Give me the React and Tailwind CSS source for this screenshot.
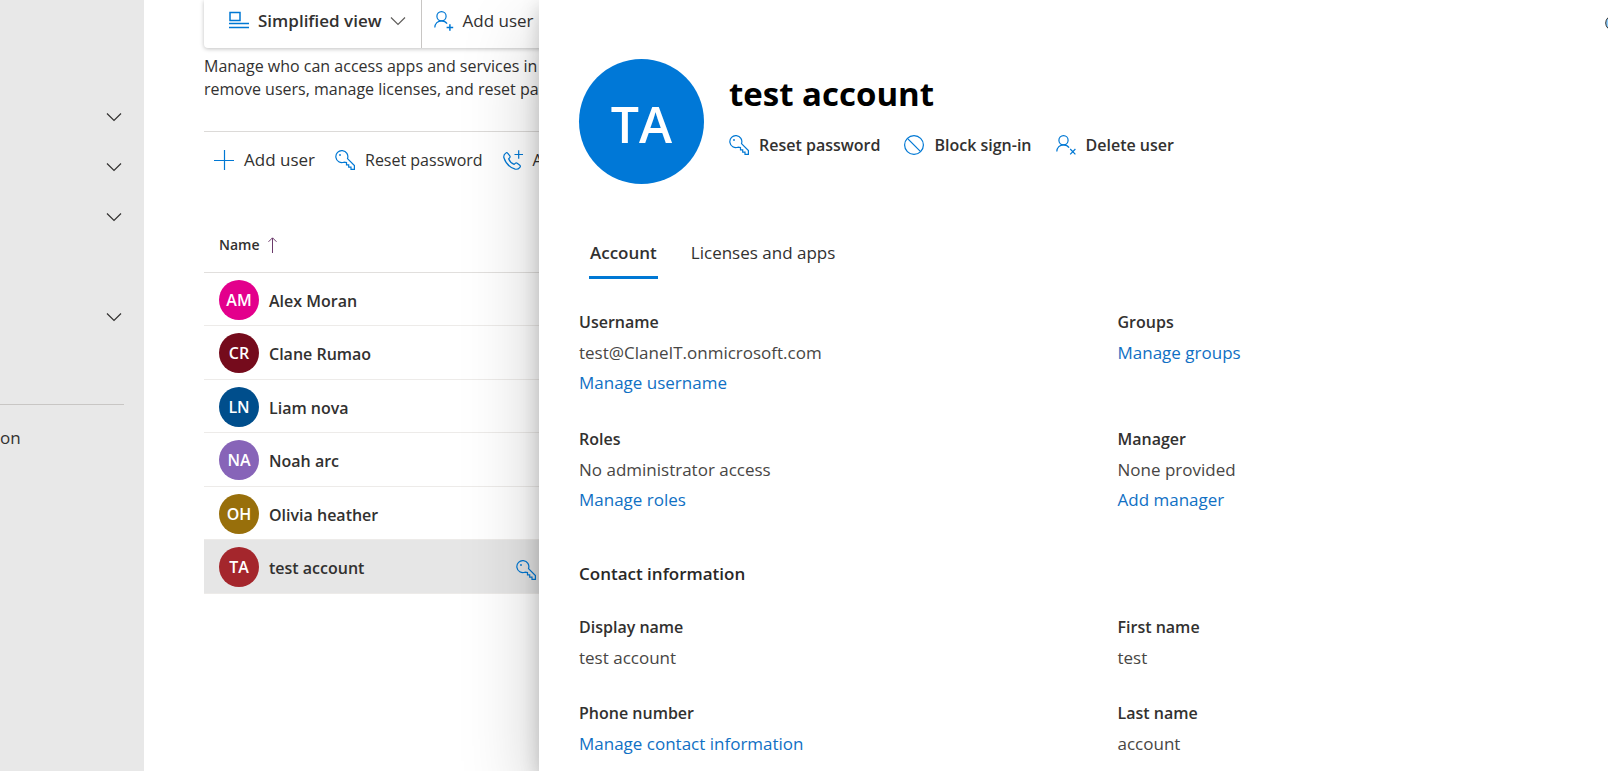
import React from "react";

function Icon({ children, className = "text-[#0078d4]", size = 20 }) {
  return (
    <svg
      width={size}
      height={size}
      viewBox="0 0 20 20"
      fill="none"
      stroke="currentColor"
      strokeWidth="1.2"
      className={`shrink-0 ${className}`}
      aria-hidden="true"
    >
      {children}
    </svg>
  );
}

const KeyIcon = ({ className }) => (
  <Icon className={className}>
    <path d="M12.5 8.6 19.4 15.5V19.4H16V17.1H13.7V14.8H11.5V12.6L9 12.2A6 6 0 1 1 12.5 8.6Z" />
    <circle cx="5" cy="5" r="0.9" fill="currentColor" stroke="none" />
  </Icon>
);

const UserIcon = ({ children }) => (
  <Icon>
    <circle cx="7.5" cy="5.2" r="4.6" />
    <path d="M.8 16.5C.9 12.6 3.8 9.8 7.5 9.8c2.4 0 4.4 1 5.6 2.8" />
    {children}
  </Icon>
);

const UserPlusIcon = () => (
  <UserIcon>
    <path d="M12.6 16.5H19.2M15.9 13.2V19.8" strokeWidth="1.5" />
  </UserIcon>
);

const UserRemoveIcon = () => (
  <UserIcon>
    <path d="M14.2 14 19.4 19.4M19.4 14 14.2 19.4" />
  </UserIcon>
);

const PlusIcon = () => (
  <Icon>
    <path d="M0 10.5H20M10.5 0V20" />
  </Icon>
);

const BlockIcon = () => (
  <Icon>
    <circle cx="10" cy="10" r="9.4" />
    <path d="M3.4 3.4 16.6 16.6" />
  </Icon>
);

const PhonePlusIcon = () => (
  <Icon>
    <path d="M4.6 3.2 6.8 5.8C7.3 6.5 7.2 7.2 6.6 7.8L5.6 8.8C6.6 11.4 8.6 13.4 11.2 14.4L12.2 13.4C12.8 12.8 13.5 12.7 14.2 13.2L16.8 15.2C17.6 15.9 17.5 16.6 16.9 17.3 15.7 18.8 14.2 19.6 12.2 19.1 6.8 17.4 2.6 13.2.9 7.8.4 5.8 1.2 4.3 2.7 3.1 3.4 2.5 4.1 2.5 4.6 3.2Z" />
    <path d="M11.5 4.5H20M15.7.3V8.8" />
  </Icon>
);

const ViewIcon = () => (
  <Icon>
    <path d="M1 1.5H11V9.5H1Z" strokeWidth="1.5" />
    <path d="M0 12.5H20M0 16.5H20" strokeWidth="1.5" />
  </Icon>
);

const Chevron = ({ className = "" }) => (
  <svg width="16" height="16" viewBox="0 0 16 16" fill="none" stroke="currentColor" strokeWidth="1.2" className={className} aria-hidden="true">
    <path d="M1 4.5 8 11.5 15 4.5" />
  </svg>
);

const users = [
  ["AM", "Alex Moran", "bg-[#e3008c]"],
  ["CR", "Clane Rumao", "bg-[#750b1c]"],
  ["LN", "Liam nova", "bg-[#004e8c]"],
  ["NA", "Noah arc", "bg-[#8764b8]"],
  ["OH", "Olivia heather", "bg-[#986f0b]"],
  ["TA", "test account", "bg-[#a4262c]"],
];

function Field({ label, value, link }) {
  return (
    <div>
      <h3 className="text-[16px] leading-[31px] font-semibold text-[#323130]">{label}</h3>
      {value && <p className="text-[#484644]">{value}</p>}
      {link && (
        <a href="#" className="block text-[#1070c4]">
          {link}
        </a>
      )}
    </div>
  );
}

function Sidebar() {
  return (
    <nav className="w-36 shrink-0 bg-[#e8e8e8] pt-[92px]" aria-label="Main">
      {[true, true, true, false, true].map((expandable, i) => (
        <div key={i} className="flex h-[50px] items-center justify-end pr-[22px]">
          {expandable && (
            <button aria-label="Expand section">
              <Chevron />
            </button>
          )}
        </div>
      ))}
      <hr className="mt-[62px] mr-5 border-[#c8c6c4]" />
      <a href="#" className="block pt-[21px] leading-6">
        on
      </a>
    </nav>
  );
}

function UserList() {
  return (
    <main className="min-w-0 flex-1 overflow-hidden bg-white pl-[60px] text-[16px]">
      <div className="flex h-12 items-center rounded-b bg-white pl-[25px] text-[17px] whitespace-nowrap shadow-[0_1px_4px_rgba(0,0,0,0.25)]">
        <button className="flex h-full items-center pb-[7px] text-[17px] font-semibold">
          <ViewIcon />
          <span className="mr-2 ml-[9px]">Simplified view</span>
          <Chevron className="text-[#605e5c]" />
        </button>
        <div className="mr-3 ml-[15px] h-full w-px bg-[#c8c6c4]" />
        <button className="flex h-full items-center gap-[9px] pb-[7px]">
          <UserPlusIcon />
          Add user
        </button>
      </div>
      <p className="mt-[7px] leading-[23px] whitespace-nowrap">
        Manage who can access apps and services in your organization. Add or
        <br />
        remove users, manage licenses, and reset passwords.
      </p>
      <div className="mt-[30px] flex items-center gap-5 border-t border-[#dcdad8] pt-4 pl-[10px] whitespace-nowrap">
        <button className="flex items-center gap-[10px] text-[17px]">
          <PlusIcon />
          Add user
        </button>
        <button className="flex items-center gap-[10px]">
          <KeyIcon />
          Reset password
        </button>
        <button className="flex items-center gap-[10px]">
          <PhonePlusIcon />
          Add
        </button>
      </div>
      <table className="mt-[47px] w-full border-collapse">
        <thead>
          <tr className="h-[53px] border-b border-[#e1dfdd]">
            <th className="pl-[15px] text-left text-[14px] font-semibold">
              <button className="flex items-center gap-2">
                Name
                <svg width="9" height="16" viewBox="0 0 9 16" fill="none" stroke="#6b3a6b" aria-hidden="true">
                  <path d="M4.5 16V1M.5 4.8 4.5.8 8.5 4.8" />
                </svg>
              </button>
            </th>
            <th />
          </tr>
        </thead>
        <tbody>
          {users.map(([initials, name, color]) => (
            <tr key={name} className="h-[54px] border-b border-[#edebe9] odd:h-[53px] last:bg-[#e6e6e6]">
              <td className="w-[312px] pt-[2px] pl-[15px]">
                <div className="flex items-center gap-[10px] font-semibold">
                  <span className={`flex size-10 items-center justify-center rounded-full text-white ${color}`}>
                    {initials}
                  </span>
                  <span className="pt-[2px]">{name}</span>
                </div>
              </td>
              <td>
                {initials === "TA" && (
                  <button aria-label="Reset password" className="mt-2 flex">
                    <KeyIcon />
                  </button>
                )}
              </td>
            </tr>
          ))}
        </tbody>
      </table>
    </main>
  );
}

function DetailsPanel() {
  return (
    <section
      className="absolute inset-y-0 right-0 left-[539px] overflow-hidden bg-white pl-10 shadow-[0_32px_72px_rgba(0,0,0,0.22),0_6px_18px_rgba(0,0,0,0.18)]"
      aria-label="User details"
    >
      <button aria-label="Dark mode" className="absolute top-[15px] -right-[13px]">
        <svg width="16" height="16" viewBox="0 0 16 16" fill="#8fd0ff" stroke="#323130" aria-hidden="true">
          <circle cx="8" cy="8" r="7.3" />
        </svg>
      </button>
      <header className="flex items-start gap-[25px] pt-[59px]">
        <span className="flex size-[125px] shrink-0 items-center justify-center rounded-full bg-[#0078d7] pt-1 text-[50px] leading-none font-semibold text-white">
          TA
        </span>
        <div className="pt-[11px]">
          <h1 className="text-[33px] leading-[48px] font-bold text-black">test account</h1>
          <div className="mt-[15px] flex flex-wrap items-center gap-6 text-[16px] font-semibold">
            <button className="flex items-center gap-[10px]">
              <KeyIcon />
              Reset password
            </button>
            <button className="flex items-center gap-[10px]">
              <BlockIcon />
              Block sign-in
            </button>
            <button className="flex items-center gap-[10px]">
              <UserRemoveIcon />
              Delete user
            </button>
          </div>
        </div>
      </header>
      <div role="tablist" className="mt-14 ml-[10px] flex gap-8">
        <button role="tab" aria-selected="true" className="h-[39px] border-b-3 border-[#0078d4] px-px pb-[11px] font-semibold">
          Account
        </button>
        <button role="tab" aria-selected="false" className="h-[39px] border-b-3 border-transparent px-px pb-[11px]">
          Licenses and apps
        </button>
      </div>
      <div className="mt-7 grid grid-cols-2 gap-x-12 gap-y-[26px] leading-[30px]">
        <Field label="Username" value="test@ClaneIT.onmicrosoft.com" link="Manage username" />
        <Field label="Groups" link="Manage groups" />
        <Field label="Roles" value="No administrator access" link="Manage roles" />
        <Field label="Manager" value="None provided" link="Add manager" />
      </div>
      <h2 className="mt-[44px] leading-[30px] font-semibold text-[#292827]">Contact information</h2>
      <div className="mt-[23px] grid grid-cols-2 gap-x-12 gap-y-[25px] leading-[30px]">
        <Field label="Display name" value="test account" />
        <Field label="First name" value="test" />
        <Field label="Phone number" link="Manage contact information" />
        <Field label="Last name" value="account" />
      </div>
    </section>
  );
}

export default function App() {
  return (
    <div className="relative flex min-h-screen overflow-hidden bg-white font-['Segoe_UI','Open_Sans',sans-serif] text-[17px] leading-6 text-[#323130]">
      <Sidebar />
      <UserList />
      <DetailsPanel />
    </div>
  );
}
